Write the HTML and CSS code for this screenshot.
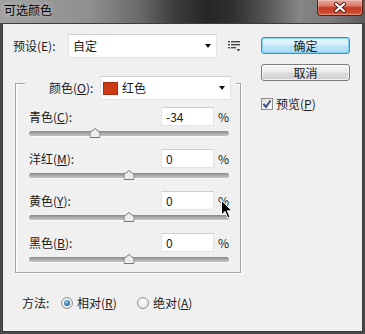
FILE: index.html
```html
<!DOCTYPE html>
<html>
<head>
<meta charset="utf-8">
<title>可选颜色</title>
<link rel="stylesheet" href="styles.css">
</head>
<body>
<div class="window">
  <div class="titlebar">
    <span class="title">可选颜色</span>
    <div class="close">
      <svg width="14" height="11" viewBox="0 0 14 11"><path d="M3 2 L11 9 M11 2 L3 9" stroke="#5a1a10" stroke-width="4" stroke-linecap="round"/><path d="M3 2 L11 9 M11 2 L3 9" stroke="#fff" stroke-width="2.2" stroke-linecap="round"/></svg>
    </div>
  </div>
  <div class="client">
    <div class="main">
      <div class="preset-row">
        <span class="lbl preset-lbl">预设(E):</span>
        <div class="select preset-select"><span>自定</span><i class="arrow"></i></div>
        <svg class="menu-icon" width="13" height="11" viewBox="0 0 13 11">
          <rect x="0" y="0" width="2" height="1.4" fill="#444"/><rect x="3" y="0" width="9" height="1.4" fill="#444"/>
          <rect x="0" y="3" width="2" height="1.4" fill="#444"/><rect x="3" y="3" width="9" height="1.4" fill="#444"/>
          <rect x="0" y="6" width="2" height="1.4" fill="#444"/><rect x="3" y="6" width="5" height="1.4" fill="#444"/>
          <path d="M8.5 8 L12.5 8 L10.5 10.5 Z" fill="#444"/>
        </svg>
      </div>
      <div class="group">
        <div class="legend">
          <span class="lbl legend-lbl">颜色(<u>O</u>):</span>
          <div class="select color-select"><span class="swatch"></span><span class="sel-text">红色</span><i class="arrow"></i></div>
        </div>
        <div class="rows">
          <div class="slider-row">
            <div class="field"><span class="lbl">青色(<u>C</u>):</span><div class="input">-34</div><span class="pct">%</span></div>
            <div class="track-wrap"><div class="track"></div><span class="thumb" style="left:33%"><svg width="11" height="10" viewBox="0 0 11 10"><path d="M5.5 0.5 L10.5 4.5 L10.5 9.5 L0.5 9.5 L0.5 4.5 Z" fill="#ececec" stroke="#7a7a7a"/></svg></span></div>
          </div>
          <div class="slider-row">
            <div class="field"><span class="lbl">洋红(<u>M</u>):</span><div class="input">0</div><span class="pct">%</span></div>
            <div class="track-wrap"><div class="track"></div><span class="thumb" style="left:50%"><svg width="11" height="10" viewBox="0 0 11 10"><path d="M5.5 0.5 L10.5 4.5 L10.5 9.5 L0.5 9.5 L0.5 4.5 Z" fill="#ececec" stroke="#7a7a7a"/></svg></span></div>
          </div>
          <div class="slider-row">
            <div class="field"><span class="lbl">黄色(<u>Y</u>):</span><div class="input">0</div><span class="pct">%</span></div>
            <div class="track-wrap"><div class="track"></div><span class="thumb" style="left:50%"><svg width="11" height="10" viewBox="0 0 11 10"><path d="M5.5 0.5 L10.5 4.5 L10.5 9.5 L0.5 9.5 L0.5 4.5 Z" fill="#ececec" stroke="#7a7a7a"/></svg></span></div>
          </div>
          <div class="slider-row">
            <div class="field"><span class="lbl">黑色(<u>B</u>):</span><div class="input">0</div><span class="pct">%</span></div>
            <div class="track-wrap"><div class="track"></div><span class="thumb" style="left:50%"><svg width="11" height="10" viewBox="0 0 11 10"><path d="M5.5 0.5 L10.5 4.5 L10.5 9.5 L0.5 9.5 L0.5 4.5 Z" fill="#ececec" stroke="#7a7a7a"/></svg></span></div>
          </div>
        </div>
      </div>
      <div class="method-row">
        <span class="lbl method-lbl">方法:</span>
        <label class="radio-item"><span class="radio on"></span><span>相对(<u>R</u>)</span></label>
        <label class="radio-item"><span class="radio"></span><span>绝对(<u>A</u>)</span></label>
      </div>
    </div>
    <div class="side">
      <div class="btn btn-default">确定</div>
      <div class="btn">取消</div>
      <div class="check-row">
        <span class="checkbox"><svg width="10" height="10" viewBox="0 0 10 10"><path d="M1.5 5 L4 7.8 L8.5 1.5" fill="none" stroke="#3e4f8a" stroke-width="2"/></svg></span>
        <span>预览(<u>P</u>)</span>
      </div>
    </div>
  </div>
  <svg class="cursor" width="13" height="20" viewBox="0 0 13 20"><path d="M0.5 0.5 L0.5 15 L4 11.5 L6.8 18 L9 17 L6.3 10.8 L11 10.8 Z" fill="#000" stroke="#fff" stroke-width="1"/></svg>
</div>
</body>
</html>
```
FILE: styles.css
```css
* { box-sizing: border-box; }
html, body { margin: 0; padding: 0; }
body {
  width: 365px;
  height: 334px;
  overflow: hidden;
  font-family: "Noto Sans CJK SC", "Noto Sans", sans-serif;
  font-size: 12px;
  line-height: 16px;
  color: #1a1a1a;
}
u { text-decoration: underline; text-underline-offset: 1px; }

.window {
  position: relative;
  width: 365px;
  height: 334px;
  display: flex;
  flex-direction: column;
  padding: 0 2px 2px 2px;
  background:
    linear-gradient(180deg, rgba(0,0,0,0) 0px, rgba(0,0,0,0) 23px, #4a4a4a 23px),
    linear-gradient(90deg, #a2a2a2 0%, #8e8e8e 25%, #6a6a6a 38%, #3c3c3c 48%, #262626 57%, #303030 64%, #5a5a5a 74%, #858585 82%, #7c7c7c 90%, #5c5c5c 100%);
}

.titlebar {
  height: 23px;
  display: flex;
  justify-content: space-between;
  align-items: flex-start;
}
.title {
  margin: 3px 0 0 2px;
  font-size: 12px;
  line-height: 14px;
  color: #050505;
  text-shadow: 0 0 5px rgba(255,255,255,0.55);
}
.close {
  width: 46px;
  height: 16px;
  border: 1px solid #5e1c12;
  border-top: none;
  border-radius: 0 0 4px 4px;
  background: linear-gradient(180deg, #e9a99c 0%, #d9776a 40%, #c23a22 52%, #c9462c 80%, #dc6a4a 100%);
  display: flex;
  align-items: center;
  justify-content: center;
  box-shadow: inset 0 0 0 1px rgba(255,255,255,0.25);
}

.client {
  flex: 1;
  background: #f0f0f0;
  border: 1px solid #3c3c3c;
  display: flex;
  padding: 10px 0 0 10px;
}

.main {
  width: 228px;
  display: flex;
  flex-direction: column;
}

.preset-row {
  height: 24px;
  display: flex;
  align-items: center;
}
.preset-lbl { width: 55px; }

.select {
  height: 24px;
  background: #fff;
  border: 1px solid #e3e3e3;
  border-top-color: #d0d0d0;
  display: flex;
  align-items: center;
  padding-left: 4px;
}
.preset-select { width: 149px; }
.arrow {
  margin-left: auto;
  margin-right: 5px;
  width: 0;
  height: 0;
  border-left: 3px solid transparent;
  border-right: 3px solid transparent;
  border-top: 4px solid #111;
}
.menu-icon { margin-left: 11px; }

.group {
  margin: 25px 0 0 2px;
  width: 226px;
  border: 1px solid #a4a4a4;
  box-shadow: inset 1px 1px 0 #fff, 1px 1px 0 #fff;
  padding: 0 11px 5px 13px;
}
.legend {
  height: 24px;
  margin: -8px -7px 0 -4px;
  padding: 0 5px 0 24px;
  background: #f0f0f0;
  display: flex;
  align-items: center;
}
.legend-lbl { width: 51px; }
.color-select { width: 131px; padding-left: 2px; }
.swatch {
  width: 15px;
  height: 13px;
  background: #cc3a16;
  border: 1px solid #a52c0e;
}
.sel-text { margin-left: 4px; }

.rows {
  margin-top: 7px;
  display: flex;
  flex-direction: column;
  gap: 8px;
}
.field {
  height: 19px;
  display: flex;
  align-items: center;
}
.field .lbl { flex: 1; }
.input {
  width: 53px;
  height: 19px;
  background: #fff;
  border: 1px solid #e4e4e4;
  border-top-color: #cfcfcf;
  padding-left: 4px;
  line-height: 17px;
}
.pct { width: 15px; text-align: right; }

.track-wrap {
  position: relative;
  height: 15px;
  display: flex;
  align-items: center;
}
.track {
  width: 100%;
  height: 5px;
  border-radius: 3px;
  background: linear-gradient(180deg, #878787 0%, #a8a8a8 45%, #c4c4c4 100%);
  box-shadow: 0 1px 0 #f8f8f8;
}
.thumb {
  position: absolute;
  top: 2px;
  width: 11px;
  height: 10px;
  transform: translateX(-50%);
  display: block;
}
.thumb svg { display: block; }

.method-row {
  margin-top: 22px;
  height: 16px;
  padding-left: 9px;
  display: flex;
  align-items: center;
}
.method-lbl { width: 39px; }
.radio-item {
  width: 76px;
  display: flex;
  align-items: center;
}
.radio {
  width: 12px;
  height: 12px;
  border-radius: 50%;
  border: 1px solid #929292;
  background: radial-gradient(circle at 50% 40%, #ffffff 0%, #e4e4e4 80%);
  margin-right: 4px;
  display: flex;
  align-items: center;
  justify-content: center;
}
.radio.on::after {
  content: "";
  width: 6px;
  height: 6px;
  border-radius: 50%;
  background: radial-gradient(circle at 40% 35%, #9fd0ee 0%, #2f7bb0 55%, #1a4e78 100%);
}

.side {
  margin-left: 20px;
  width: 89px;
  padding-top: 3px;
  display: flex;
  flex-direction: column;
}
.btn {
  height: 17px;
  border: 1px solid #7a7a7a;
  border-radius: 3px;
  background: linear-gradient(180deg, #f4f4f4 0%, #ececec 48%, #dcdcdc 52%, #d0d0d0 100%);
  box-shadow: inset 0 0 0 1px rgba(255,255,255,0.7);
  text-align: center;
  line-height: 15px;
}
.btn + .btn { margin-top: 10px; }
.btn-default {
  border-color: #3a8fc4;
  background: linear-gradient(180deg, #e8f6fd 0%, #d6effc 48%, #bde5f9 52%, #a9dbf5 100%);
  box-shadow: inset 0 0 0 1px #86d2f2;
}
.check-row {
  margin-top: 17px;
  height: 12px;
  display: flex;
  align-items: center;
}
.checkbox {
  width: 12px;
  height: 12px;
  border: 1px solid #8e8f8f;
  background: linear-gradient(135deg, #dcdcdc, #fdfdfd);
  margin-right: 3px;
  display: flex;
  align-items: center;
  justify-content: center;
}
.checkbox svg { display: block; }

.cursor {
  position: absolute;
  left: 221px;
  top: 200px;
}
```
